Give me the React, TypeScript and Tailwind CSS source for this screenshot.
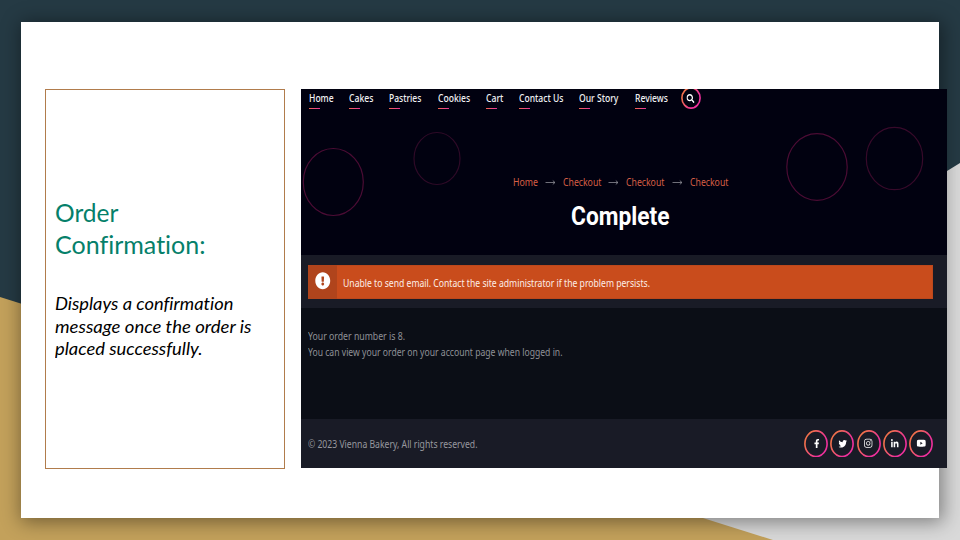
import { useLayoutEffect, useRef, type ReactNode } from "react";
import { FaExclamationCircle, FaFacebookF, FaInstagram, FaLinkedinIn, FaSearch, FaTwitter, FaYoutube } from "react-icons/fa";

// Single line of text condensed or stretched to an exact width.
function Line({ w, className = "", children }: { w: number; className?: string; children: ReactNode }) {
  const ref = useRef<HTMLSpanElement>(null);
  useLayoutEffect(() => {
    const el = ref.current;
    if (!el) return;
    el.style.transform = "none";
    el.style.transform = `scaleX(${w / el.getBoundingClientRect().width})`;
  }, [w]);
  return (
    <span className={`block whitespace-nowrap ${className}`} style={{ width: w }}>
      <span ref={ref} className="inline-block origin-left">
        {children}
      </span>
    </span>
  );
}

function Ring({ id, w, h, children }: { id: string; w: number; h: number; children: ReactNode }) {
  return (
    <span className="relative flex shrink-0 items-center justify-center text-white" style={{ width: w, height: h }}>
      <svg className="absolute inset-0" width={w} height={h}>
        <defs>
          <linearGradient id={id} x1="0" y1="0.2" x2="1" y2="0.8">
            <stop offset="0.15" stopColor="#f2704d" />
            <stop offset="0.75" stopColor="#f0309c" />
          </linearGradient>
        </defs>
        <ellipse cx={w / 2} cy={h / 2} rx={w / 2 - 0.9} ry={h / 2 - 0.9} fill="none" stroke={`url(#${id})`} strokeWidth="1.6" />
      </svg>
      <span className="scale-x-[0.9]">{children}</span>
    </span>
  );
}

const nav: [string, number][] = [
  ["Home", 24.6],
  ["Cakes", 24.4],
  ["Pastries", 32.4],
  ["Cookies", 32.2],
  ["Cart", 17.4],
  ["Contact Us", 44.4],
  ["Our Story", 39.4],
  ["Reviews", 32.8],
];

const socials = [
  { id: "facebook", icon: <FaFacebookF size={9.5} /> },
  { id: "twitter", icon: <FaTwitter size={9.5} /> },
  { id: "instagram", icon: <FaInstagram size={10.5} /> },
  { id: "linkedin", icon: <FaLinkedinIn size={9.5} /> },
  { id: "youtube", icon: <FaYoutube size={10.5} /> },
];

function Hero() {
  return (
    <header className="relative h-[166px] overflow-hidden bg-[#010110]">
      <svg className="absolute inset-0" width="646" height="166" fill="none" strokeWidth="1.2">
        <ellipse cx="32.3" cy="93" rx="30" ry="33.5" stroke="#4b0c34" />
        <ellipse cx="136" cy="69.5" rx="23" ry="26" stroke="#2e0a27" />
        <ellipse cx="516" cy="78" rx="30.2" ry="33.3" stroke="#4b0c34" />
        <ellipse cx="593.5" cy="69.5" rx="28.2" ry="31.2" stroke="#370a2a" />
      </svg>
      <nav className="relative -mt-[2px] flex h-[22px] items-start gap-[15.9px] pl-[7.7px]">
        {nav.map(([label, w]) => (
          <a key={label} className="pt-[4px]">
            <Line w={w} className="text-[10px] leading-[14px] font-medium text-[#f0f0f2]">
              {label}
            </Line>
            <span className="mt-[3px] block h-[1.3px] w-[11px] bg-linear-to-r from-[#f0644c] to-[#e8309c]" />
          </a>
        ))}
        <span className="-ml-[2.4px]">
          <Ring id="search" w={20} h={22}>
            <FaSearch size={9} />
          </Ring>
        </span>
      </nav>
      <div className="relative mt-[66px] flex h-[14px] items-center pl-[211.5px]">
        {["Home", "Checkout", "Checkout", "Checkout"].map((label, i) => (
          <span key={i} className="flex items-center">
            {i > 0 && (
              <svg className="mr-[7px] ml-[7.3px]" width="11" height="7" fill="none" stroke="#8b8b94" strokeWidth="0.8">
                <path d="M0.5 3.5H10M7.8 1.6L10 3.5L7.8 5.4" />
              </svg>
            )}
            <Line w={i === 0 ? 25 : 38.4} className="text-[10px] leading-[14px] text-[#d65f45]">
              {label}
            </Line>
          </span>
        ))}
      </div>
      <h1 className="relative mt-[12px] pl-[270px] font-['Roboto',sans-serif] text-[25.5px] leading-[31px] font-bold text-white">
        <Line w={98.5}>Complete</Line>
      </h1>
    </header>
  );
}

function Site() {
  return (
    <section className="relative flex h-[379px] w-[646px] shrink-0 flex-col font-['Noto_Sans',sans-serif]">
      <Hero />
      <div className="h-[53px] bg-[#191b26] pt-[10px] pl-[7px]">
        <div className="flex h-[34px] w-[625px] items-center border border-[#bd481c] bg-[#c94c1c]">
          <div className="-my-px -ml-px flex h-[34px] w-[29px] items-center justify-center bg-[#b0441c] pb-[2px] text-white">
            <FaExclamationCircle size={17.5} className="scale-x-[0.88]" />
          </div>
          <Line w={307} className="ml-[6px] pt-[1px] text-[10px] leading-[14px] text-[#fdeee8]">
            Unable to send email. Contact the site administrator if the problem persists.
          </Line>
        </div>
      </div>
      <main className="h-[111px] bg-[#0b0e16] pt-[20px] pl-[7px] text-[10px] leading-[16.4px] text-[#8f9196]">
        <Line w={97}>Your order number is 8.</Line>
        <Line w={254.5}>You can view your order on your account page when logged in.</Line>
      </main>
      <footer className="flex h-[49px] items-center justify-between bg-[#191b26] pr-[14px] pl-[7px]">
        <Line w={169.5} className="pt-px text-[10px] leading-[14px] text-[#97989e]">
          © 2023 Vienna Bakery, All rights reserved.
        </Line>
        <div className="flex gap-[2.2px]">
          {socials.map((s) => (
            <Ring key={s.id} id={s.id} w={24} h={27.5}>
              {s.icon}
            </Ring>
          ))}
        </div>
      </footer>
    </section>
  );
}

export default function App() {
  return (
    <div className="relative h-[540px] w-[960px] overflow-hidden bg-[#253a44]">
      <svg className="absolute inset-0" width="960" height="540">
        <polygon points="960,163 960,540 640,540 640,360" fill="#d9d9d9" />
        <polygon points="0,297 773,540 0,540" fill="#c3a15b" />
      </svg>
      <div className="relative pt-[22px] pl-[21px]">
        <div className="flex h-[496px] w-[918px] gap-[16px] bg-white pt-[67px] pl-[24px] shadow-[2px_2px_18px_2px_rgba(0,0,0,0.42)]">
          <aside className="h-[380px] w-[240px] shrink-0 border border-[#b17c4c] pt-[106px] pl-[9px] font-['Lato',sans-serif] [font-variant-ligatures:none]">
            <h2 className="text-[25px] leading-[32px] text-[#05806a]">
              <Line w={63.5}>Order</Line>
              <Line w={150.5}>Confirmation:</Line>
            </h2>
            <p className="mt-[33px] text-[17.2px] leading-[22.7px] text-black italic">
              <Line w={178.5}>Displays a confirmation</Line>
              <Line w={196.5}>message once the order is</Line>
              <Line w={147.5}>placed successfully.</Line>
            </p>
          </aside>
          <Site />
        </div>
      </div>
    </div>
  );
}
